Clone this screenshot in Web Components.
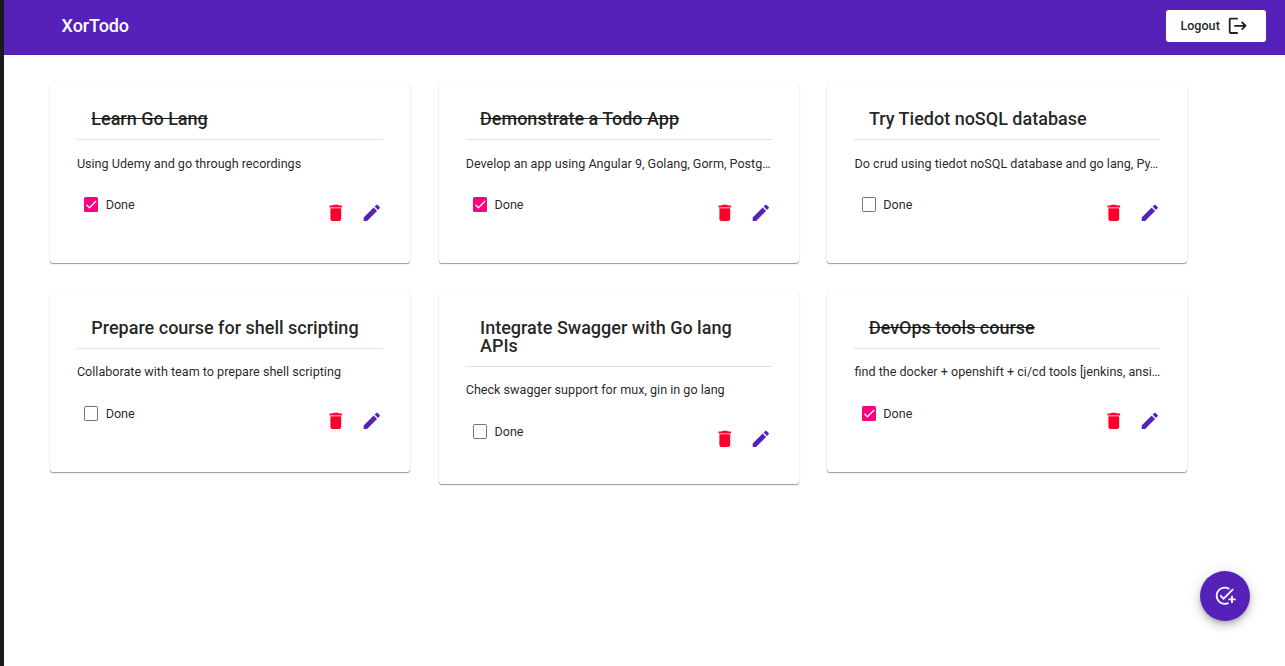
<!DOCTYPE html>
<html lang="en">
<head>
<meta charset="utf-8">
<title>XorTodo</title>
<style>
html, body { height: 100%; margin: 0; }
body { background: #fff; font-family: Roboto, "Liberation Sans", sans-serif; color: rgba(0,0,0,.87); overflow: hidden; }
</style>
</head>
<body>
<todo-app></todo-app>
<script>
const ICONS = {
  logout: 'M17 7l-1.41 1.41L18.17 11H8v2h10.17l-2.58 2.58L17 17l5-5zM4 5h8V3H4c-1.1 0-2 .9-2 2v14c0 1.1.9 2 2 2h8v-2H4V5z',
  delete: 'M6 19c0 1.1.9 2 2 2h8c1.1 0 2-.9 2-2V7H6v12zM19 4h-3.5l-1-1h-5l-1 1H5v2h14V4z',
  edit: 'M3 17.25V21h3.75L17.81 9.94l-3.75-3.75L3 17.25zM20.71 7.04c.39-.39.39-1.02 0-1.41l-2.34-2.34c-.39-.39-1.02-.39-1.41 0l-1.83 1.83 3.75 3.75 1.83-1.83z',
  add_task: 'M22 5.18L10.59 16.6l-4.24-4.24 1.41-1.41 2.83 2.83 10-10L22 5.18zM12 20c-4.41 0-8-3.59-8-8s3.59-8 8-8c1.57 0 3.04.46 4.28 1.25l1.45-1.45C16.1 2.67 14.13 2 12 2 6.48 2 2 6.48 2 12s4.48 10 10 10c1.73 0 3.36-.44 4.78-1.22l-1.5-1.5C14.28 19.74 13.17 20 12 20zM19 15h-3v2h3v3h2v-3h3v-2h-3v-3h-2v3z'
};

class MdIcon extends HTMLElement {
  connectedCallback() {
    this.attachShadow({ mode: 'open' }).innerHTML = `
      <style>:host{display:block;width:21.6px;height:21.6px;flex:none}svg{display:block;width:100%;height:100%;fill:currentColor}</style>
      <svg viewBox="0 0 24 24"><path d="${ICONS[this.getAttribute('name')]}"/></svg>`;
  }
}
customElements.define('md-icon', MdIcon);

class MdCheckbox extends HTMLElement {
  connectedCallback() {
    this.attachShadow({ mode: 'open' }).innerHTML = `
      <style>
        :host{display:flex;align-items:center;gap:7.2px;font-size:12.6px;line-height:21.6px}
        .box{box-sizing:border-box;width:14.4px;height:14.8px;margin-bottom:.6px;border:1.5px solid rgba(0,0,0,.54);border-radius:1.5px;flex:none}
        :host([checked]) .box{border:0;background:#ff0081}
        svg{display:none;width:100%;height:100%;fill:none;stroke:#fff;stroke-width:2.13}
        :host([checked]) svg{display:block}
      </style>
      <span class="box"><svg viewBox="0 0 24 24"><path d="M4.1 12.7 9 17.6 20.3 6.3"/></svg></span><span><slot></slot></span>`;
  }
}
customElements.define('md-checkbox', MdCheckbox);

class AppBar extends HTMLElement {
  connectedCallback() {
    this.attachShadow({ mode: 'open' }).innerHTML = `
      <style>
        :host{display:flex;box-sizing:border-box;height:55px;padding:0 19px 3px 57.6px;align-items:center;justify-content:space-between;background:#5521b8}
        h1{margin:0;color:#fff;font-size:18px;font-weight:500;line-height:28px;letter-spacing:-.1px}
        button{display:flex;align-items:center;gap:7px;box-sizing:border-box;width:100px;height:32px;padding:0 0 0 14.4px;border:0;border-radius:3px;background:#fff;color:rgba(0,0,0,.87);font:500 12.6px/32px Roboto,"Liberation Sans",sans-serif}
      </style>
      <h1><slot></slot></h1>
      <button><span>Logout</span><md-icon name="logout"></md-icon></button>`;
  }
}
customElements.define('app-bar', AppBar);

class TodoCard extends HTMLElement {
  connectedCallback() {
    const done = this.hasAttribute('done');
    this.attachShadow({ mode: 'open' }).innerHTML = `
      <style>
        :host{display:block;box-sizing:border-box;width:360px;min-height:180px;padding:27px 27px 33.8px;border-radius:3.6px;background:#fff;
          box-shadow:0 1.8px .9px -.9px rgba(0,0,0,.26),0 .9px .9px 0 rgba(0,0,0,.13),0 1px 2.7px 0 rgba(0,0,0,.08)}
        h2{margin:0;padding:0 14.4px 11.6px;border-bottom:1px solid rgba(0,0,0,.12);font-size:18px;line-height:18px;font-weight:500}
        :host([done]) h2{text-decoration:line-through}
        p{margin:14.2px 0 0;font-size:12.6px;line-height:18px;white-space:nowrap}
        .row{display:flex;align-items:flex-start;justify-content:space-between;padding:21.6px 0 0 7.2px}
        .actions{display:flex;gap:14.4px;padding:7.4px 0 0}
        .del{color:#ff0028}.edit{color:#5521b8}
      </style>
      <h2><slot name="title"></slot></h2>
      <p><slot></slot></p>
      <div class="row">
        <md-checkbox ${done ? 'checked' : ''}>Done</md-checkbox>
        <div class="actions"><md-icon class="del" name="delete"></md-icon><md-icon class="edit" name="edit"></md-icon></div>
      </div>`;
  }
}
customElements.define('todo-card', TodoCard);

class FabButton extends HTMLElement {
  connectedCallback() {
    this.attachShadow({ mode: 'open' }).innerHTML = `
      <style>:host{display:flex;align-items:center;justify-content:center;width:50.4px;height:50.4px;border-radius:50%;background:#5521b8;color:#fff;
        box-shadow:0 2.7px 4.5px -.9px rgba(0,0,0,.2),0 5.4px 9px 0 rgba(0,0,0,.14),0 .9px 16.2px 0 rgba(0,0,0,.12)}</style>
      <md-icon name="add_task"></md-icon>`;
  }
}
customElements.define('fab-button', FabButton);

class TodoApp extends HTMLElement {
  connectedCallback() {
    this.attachShadow({ mode: 'open' }).innerHTML = `
      <style>
        :host{display:block;box-sizing:border-box;height:100vh;border-left:4px solid #1b1a18}
        main{display:grid;grid-template-columns:repeat(3,360px);gap:28.8px;align-items:start;padding:27.8px 0 0 45.9px}
        fab-button{position:absolute;right:34.8px;bottom:44.8px}
      </style>
      <app-bar>XorTodo</app-bar>
      <main>
        <todo-card done><span slot="title">Learn Go Lang</span>Using Udemy and go through recordings</todo-card>
        <todo-card done><span slot="title">Demonstrate a Todo App</span>Develop an app using Angular 9, Golang, Gorm, Postg…</todo-card>
        <todo-card><span slot="title">Try Tiedot noSQL database</span>Do crud using tiedot noSQL database and go lang, Py…</todo-card>
        <todo-card><span slot="title">Prepare course for shell scripting</span>Collaborate with team to prepare shell scripting</todo-card>
        <todo-card><span slot="title">Integrate Swagger with Go lang APIs</span>Check swagger support for mux, gin in go lang</todo-card>
        <todo-card done><span slot="title">DevOps tools course</span>find the docker + openshift + ci/cd tools [jenkins, ansi…</todo-card>
      </main>
      <fab-button></fab-button>`;
  }
}
customElements.define('todo-app', TodoApp);
</script>
</body>
</html>
